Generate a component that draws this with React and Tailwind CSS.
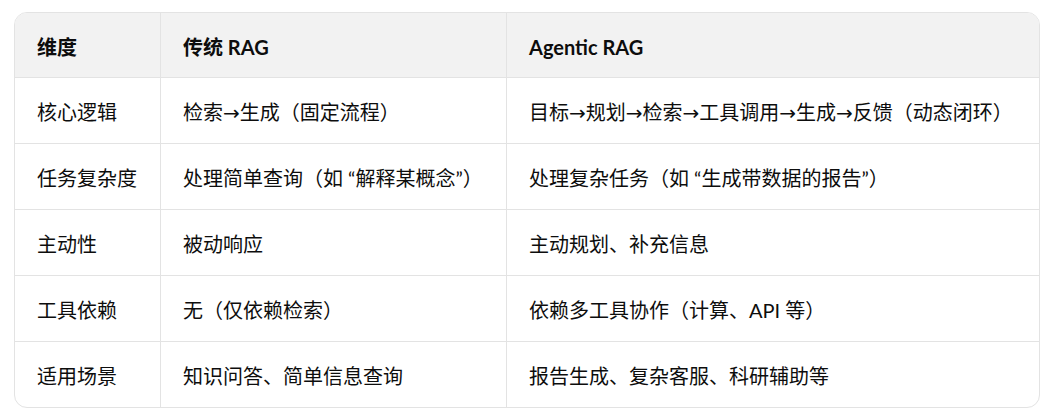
const header = ["维度", "传统 RAG", "Agentic RAG"];

const rows = [
  ["核心逻辑", "检索→生成（固定流程）", "目标→规划→检索→工具调用→生成→反馈（动态闭环）"],
  ["任务复杂度", "处理简单查询（如 “解释某概念”）", "处理复杂任务（如 “生成带数据的报告”）"],
  ["主动性", "被动响应", "主动规划、补充信息"],
  ["工具依赖", "无（仅依赖检索）", "依赖多工具协作（计算、API 等）"],
  ["适用场景", "知识问答、简单信息查询", "报告生成、复杂客服、科研辅助等"],
];

// arrows come out too wide in the CJK font, so give them their own
function Cell({ text }) {
  const parts = text.split("→");
  return (
    <>
      {parts.map((p, i) => (
        <span key={i}>
          {p}
          {i < parts.length - 1 && (
            <span style={{ fontFamily: '"DejaVu Sans", sans-serif' }}>→</span>
          )}
        </span>
      ))}
    </>
  );
}

export default function App() {
  return (
    <div
      className="w-[1058px] h-[418px] bg-white pt-[12px] pl-[14px] text-[#0d0d0d]"
      style={{ fontFamily: 'Lato, "Noto Sans CJK SC", sans-serif' }}
    >
      <div className="w-[1026px] border border-[#e3e3e3] rounded-[13px] overflow-hidden">
        <div className="grid grid-cols-[146px_346px_1fr] h-[65px] bg-[#f2f2f2] border-b border-[#e3e3e3]">
          {header.map((h, i) => (
            <div
              key={h}
              className={`flex items-center pl-[22px] pt-[3px] text-[20px] font-bold ${i < 2 ? "border-r border-[#e3e3e3]" : ""}`}
            >
              {h}
            </div>
          ))}
        </div>
        {rows.map((r, ri) => (
          <div
            key={r[0]}
            className={`grid grid-cols-[146px_346px_1fr] ${ri < rows.length - 1 ? "h-[66px] border-b border-[#e3e3e3]" : "h-[65px]"}`}
          >
            {r.map((c, i) => (
              <div
                key={i}
                className={`flex items-center pl-[22px] pt-[3px] text-[20px] whitespace-nowrap ${i < 2 ? "border-r border-[#e3e3e3]" : ""}`}
              >
                <Cell text={c} />
              </div>
            ))}
          </div>
        ))}
      </div>
    </div>
  );
}
